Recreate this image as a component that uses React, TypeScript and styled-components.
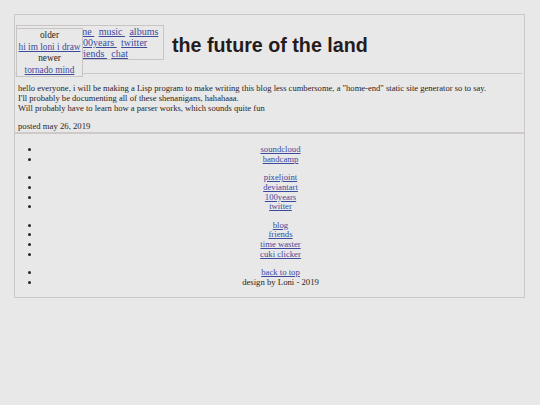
import React from "react";
import styled, { createGlobalStyle } from "styled-components";

const GlobalStyle = createGlobalStyle`
  html, body {
    margin: 0;
    padding: 0;
    background: #e8e8e8;
  }
  body {
    font-family: "Liberation Serif", "Times New Roman", serif;
    font-size: 8.7px;
    color: #2b2424;
  }
  a {
    color: #3c4a9e;
  }
`;

const Page = styled.div`
  margin: 14px;
  width: 509px;
  border: 1px solid #cdc8c8;
`;

const Header = styled.header`
  position: relative;
  display: flex;
  align-items: flex-start;
  gap: 8px;
  padding: 10px 2px 0 1px;
  height: 59px;
  box-sizing: border-box;
  border-bottom: 1px solid #cdc8c8;
  margin-right: 2px;
`;

const Nav = styled.nav`
  border: 1px solid #c8c4c4;
  width: 146px;
  height: 33px;
  font-size: 10px;
  line-height: 11.2px;
  text-align: center;
  white-space: nowrap;
  overflow: hidden;
`;

const NavLine = styled.div`
  a + a {
    margin-left: 4.4px;
  }
`;

const Pager = styled.div`
  position: absolute;
  left: 1px;
  top: 13px;
  width: 65px;
  height: 46px;
  border: 1px solid #c8c4c4;
  background: #e8e8e8;
  font-size: 9.3px;
  line-height: 11.6px;
  text-align: center;
  white-space: nowrap;
  padding-top: 1px;
`;

const Title = styled.h1`
  margin: 9px 0 0;
  font-family: "Liberation Sans", Arial, sans-serif;
  font-size: 19.7px;
  font-weight: bold;
  color: #261b1b;
  line-height: 22px;
`;

const Post = styled.article`
  padding: 0 3px;
  border-bottom: 2px solid #cfcaca;
`;

const PostText = styled.p`
  margin: 8.7px 0;
  font-size: 8.57px;
  line-height: 10px;
`;

const Posted = styled.div`
  line-height: 10px;
  padding-bottom: 1px;
`;

const Footer = styled.footer`
  padding: 2px 3px 1px;
  text-align: center;
`;

const LinkList = styled.ul`
  margin: 8.7px 0;
  padding-left: 22px;
  line-height: 9.7px;
`;

const navLines = [
  ["loni's ", "cool home ", "music ", "albums "],
  ["pixeljoint ", "100years ", "twitter "],
  ["blog ", "friends ", "chat "],
];

const groups = [
  ["soundcloud", "bandcamp"],
  ["pixeljoint", "deviantart", "100years", "twitter"],
  ["blog", "friends", "time waster", "cuki clicker"],
];

export default function App() {
  return (
    <>
      <GlobalStyle />
      <Page>
        <Header>
          <Nav>
            {navLines.map((line, i) => (
              <NavLine key={i}>
                {line.map((l) => (
                  <a href="#" key={l}>
                    {l}
                  </a>
                ))}
              </NavLine>
            ))}
          </Nav>
          <Pager>
            <div>older</div>
            <a href="#">hi im loni i draw</a>
            <div>newer</div>
            <a href="#">tornado mind</a>
          </Pager>
          <Title>the future of the land</Title>
        </Header>
        <Post>
          <PostText>
            hello everyone, i will be making a Lisp program to make writing this blog less
            cumbersome, a "home-end" static site generator so to say.
            <br />
            I'll probably be documenting all of these shenanigans, hahahaaa.
            <br />
            Will probably have to learn how a parser works, which sounds quite fun
          </PostText>
          <Posted>posted may 26, 2019</Posted>
        </Post>
        <Footer>
          {groups.map((g, i) => (
            <LinkList key={i}>
              {g.map((l) => (
                <li key={l}>
                  <a href="#">{l}</a>
                </li>
              ))}
            </LinkList>
          ))}
          <LinkList>
            <li>
              <a href="#">back to top</a>
            </li>
            <li>design by Loni - 2019</li>
          </LinkList>
        </Footer>
      </Page>
    </>
  );
}
